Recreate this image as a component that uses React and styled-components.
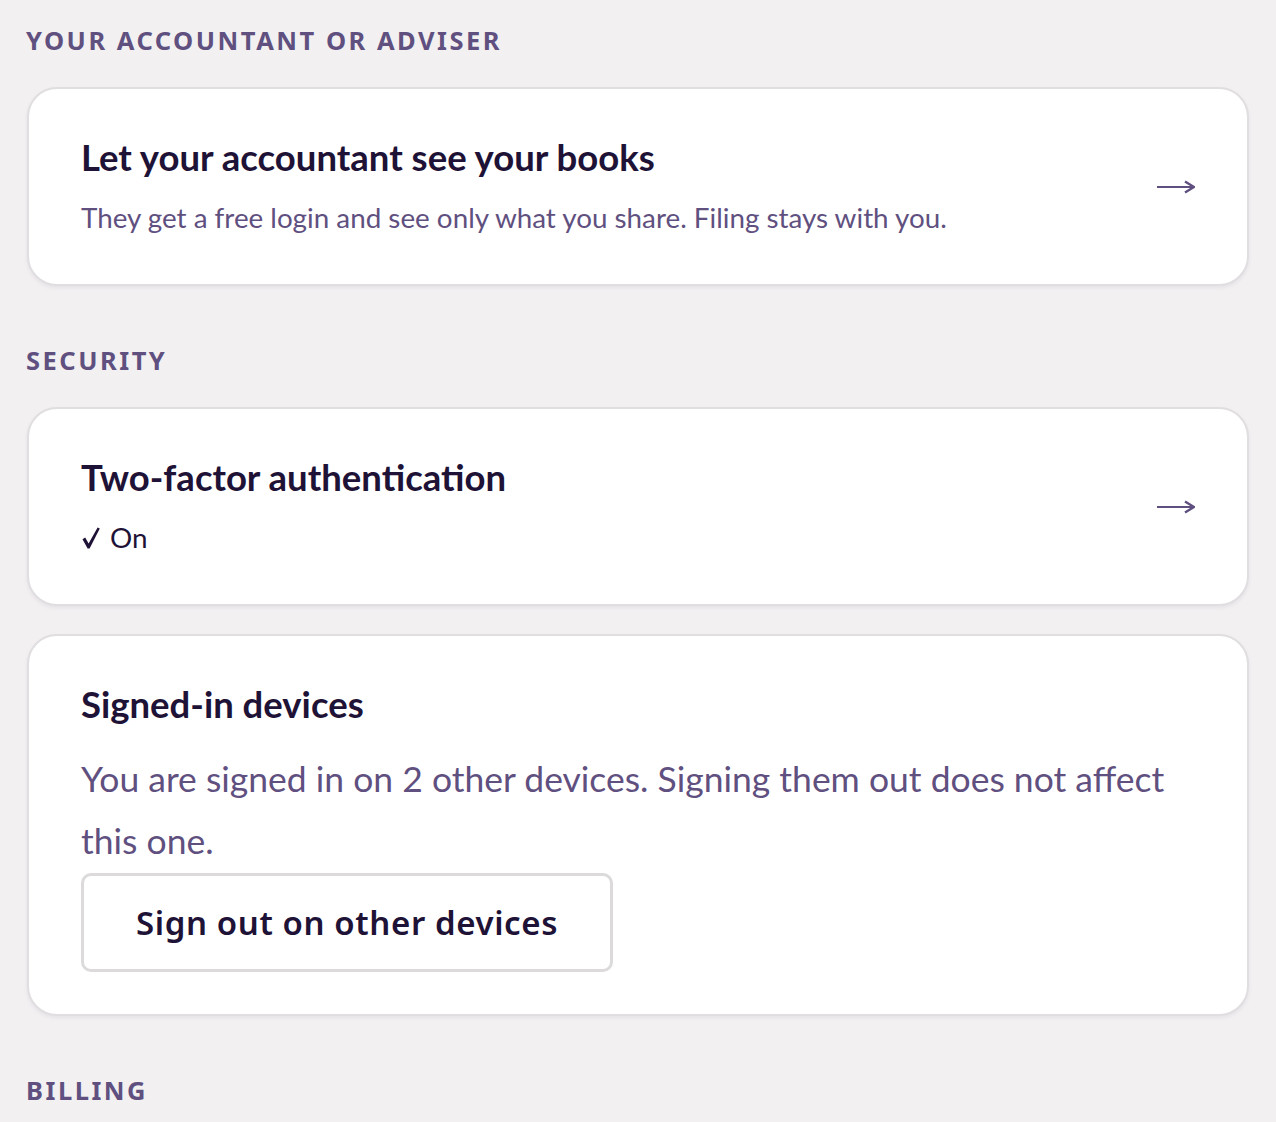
import React from "react";
import styled, { createGlobalStyle } from "styled-components";

const Global = createGlobalStyle`
  html, body { margin: 0; padding: 0; background: #f2f0f1; }
  body { font-family: Lato, "Noto Sans", sans-serif; -webkit-font-smoothing: antialiased; }
  * { box-sizing: border-box; }
`;

const Page = styled.div`
  padding: 25px 27px 40px 27px;
  display: flex;
  flex-direction: column;
  gap: 59px;
`;

const Section = styled.section`
  display: flex;
  flex-direction: column;
`;

const Label = styled.h2`
  margin: 0 0 32px -1px;
  font-family: "Noto Sans", sans-serif;
  font-weight: 700;
  font-size: 25.5px;
  line-height: 30px;
  letter-spacing: 2.5px;
  text-transform: uppercase;
  color: #5f5080;
`;

const Cards = styled.div`
  display: flex;
  flex-direction: column;
  gap: 28px;
`;

const Card = styled.div`
  background: #fff;
  border: 2px solid #e0dee0;
  border-radius: 30px;
  box-shadow: 0 2px 4px rgba(40, 20, 60, 0.06);
  padding: 46px 52px ${(p) => p.$padBottom || 48}px 52px;
  display: flex;
  align-items: center;
  gap: 24px;
`;

const Body = styled.div`
  flex: 1;
  display: flex;
  flex-direction: column;
`;

const Title = styled.h3`
  margin: 0;
  font-family: Lato, sans-serif;
  font-weight: 700;
  font-size: 36.5px;
  line-height: 44px;
  color: #1e1236;
`;

const Sub = styled.p`
  margin: 21px 0 0 0;
  font-family: Lato, sans-serif;
  font-weight: 400;
  font-size: 27.8px;
  line-height: 36px;
  color: #5f5080;
`;

const Status = styled.p`
  margin: 21px 0 0 0;
  font-family: Lato, sans-serif;
  font-weight: 400;
  font-size: 27.8px;
  line-height: 36px;
  color: #1e1236;
  display: flex;
  align-items: center;
`;

const Lead = styled.p`
  margin: 22px 0 0 0;
  font-family: Lato, sans-serif;
  font-weight: 400;
  font-size: 35.5px;
  line-height: 62px;
  color: #5f5080;
`;

const CheckIcon = styled.svg`
  flex: none;
  margin: 0 10px 0 1px;
`;

const Check = () => (
  <CheckIcon width="18" height="22" viewBox="0 0 18 22">
    <path d="M0.5 12.2 L3.2 10.6 L6.6 16.6 L15.6 0.6 L17.8 1.6 L7.6 21.4 L5.6 21.4 Z" fill="#1e1236" />
  </CheckIcon>
);

const Button = styled.button`
  align-self: flex-start;
  margin-top: 1px;
  height: 99px;
  padding: 0 52px;
  background: #fff;
  border: 3px solid #dcdadb;
  border-radius: 10px;
  font-family: "Noto Sans", sans-serif;
  font-weight: 600;
  font-size: 33px;
  letter-spacing: 0.6px;
  color: #1e1236;
  cursor: pointer;
`;

const ArrowWrap = styled.div`
  flex: none;
  width: 40px;
  display: flex;
  align-items: center;
  justify-content: flex-end;
  padding-top: 3px;
`;

const Arrow = () => (
  <ArrowWrap>
    <svg width="38" height="16" viewBox="0 0 38 16" fill="none">
      <path d="M0 8H35" stroke="#5f5080" strokeWidth="2" />
      <path d="M28 2.5L37 8L28 13.5" stroke="#5f5080" strokeWidth="2.4" fill="none" />
    </svg>
  </ArrowWrap>
);

export default function App() {
  return (
    <>
      <Global />
      <Page>
        <Section>
          <Label>Your accountant or adviser</Label>
          <Cards>
            <Card>
              <Body>
                <Title>Let your accountant see your books</Title>
                <Sub>They get a free login and see only what you share. Filing stays with you.</Sub>
              </Body>
              <Arrow />
            </Card>
          </Cards>
        </Section>
        <Section>
          <Label>Security</Label>
          <Cards>
            <Card>
              <Body>
                <Title>Two-factor authentication</Title>
                <Status>
                  <Check />
                  On
                </Status>
              </Body>
              <Arrow />
            </Card>
            <Card $padBottom={42}>
              <Body>
                <Title>Signed-in devices</Title>
                <Lead>
                  You are signed in on 2 other devices. Signing them out does not affect this one.
                </Lead>
                <Button>Sign out on other devices</Button>
              </Body>
            </Card>
          </Cards>
        </Section>
        <Section>
          <Label>Billing</Label>
        </Section>
      </Page>
    </>
  );
}
